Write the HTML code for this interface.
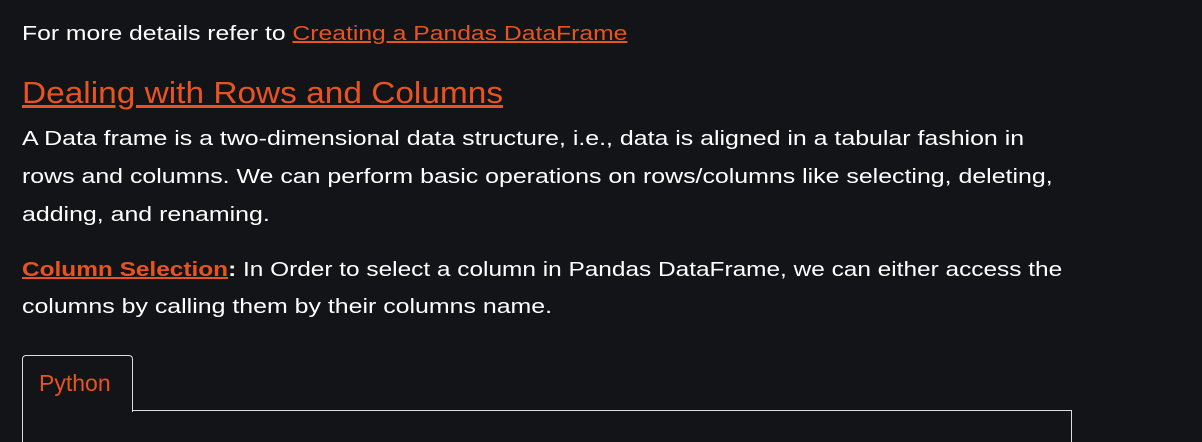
<!DOCTYPE html>
<html style="overflow:hidden;height:442px"><head><style>
body{margin:0;background:#131417;width:1202px;height:442px;overflow:hidden;font-family:"Liberation Sans",sans-serif;color:#fff;position:relative}
.t{position:absolute;left:22px;white-space:nowrap;font-size:20px;transform-origin:0 0;transform:scaleX(1.245)}
a{color:#e9531f;text-decoration:underline;text-decoration-color:#e9531f}
.tab{position:absolute;left:22px;top:355px;width:109px;height:56px;border:1px solid #ddd;border-bottom:none;border-radius:4px 4px 0 0;background:#131417;z-index:2}
.tab span{position:absolute;left:16px;top:14px;color:#e9531f;font-size:23px}
.box{position:absolute;left:22px;top:410px;width:1048px;height:32px;border:1px solid #ddd;border-bottom:none}
</style></head><body>
<div class="t" style="top:23px;transform:scaleX(1.235)">For more details refer to <a>Creating a Pandas DataFrame</a></div>
<div class="t" style="top:75px;font-size:31px;transform:scaleX(1.078)"><a>Dealing with Rows and Columns</a></div>
<div class="t" style="top:128px">A Data frame is a two-dimensional data structure, i.e., data is aligned in a tabular fashion in</div>
<div class="t" style="top:166px">rows and columns. We can perform basic operations on rows/columns like selecting, deleting,</div>
<div class="t" style="top:204px">adding, and renaming.</div>
<div class="t" style="top:259px;transform:scaleX(1.22)"><a style="font-weight:bold">Column Selection</a><b>:</b> In Order to select a column in Pandas DataFrame, we can either access the</div>
<div class="t" style="top:296px">columns by calling them by their columns name.</div>
<div class="box"></div>
<div class="tab"><span>Python</span></div>
</body></html>
